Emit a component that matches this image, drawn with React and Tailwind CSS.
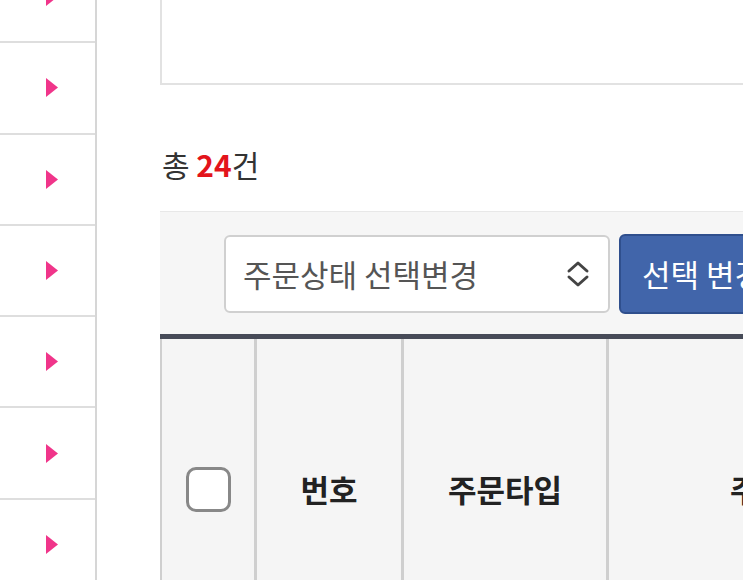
import React from "react";

const sideRows = [0, 1, 2, 3, 4, 5, 6];

function Triangle() {
  return (
    <svg width="12" height="19" viewBox="0 0 12 19" className="block">
      <path d="M0 0 L12 9.5 L0 19 Z" fill="#f0358a" />
    </svg>
  );
}

function Chevrons() {
  return (
    <svg width="24" height="28" viewBox="0 0 24 28" fill="none" stroke="#444" strokeWidth="3" strokeLinecap="round" strokeLinejoin="round">
      <path d="M3 11 L12 3 L21 11" />
      <path d="M3 17 L12 25 L21 17" />
    </svg>
  );
}

export default function App() {
  return (
    <div
      className="flex h-[580px] w-[743px] overflow-hidden bg-white"
      style={{ fontFamily: '"Noto Sans CJK KR", "Noto Sans", sans-serif' }}
    >
      <aside className="-mt-[48px] w-[97px] shrink-0 border-r-2 border-[#d6d6d6]">
        {sideRows.map((row) => (
          <div
            key={row}
            className="flex h-[91.3px] items-center border-b-2 border-[#dedede] pl-[46px]"
          >
            <Triangle />
          </div>
        ))}
      </aside>

      <main className="ml-[63px] min-w-0 flex-1">
        <div className="-mt-[35px] h-[120px] border-2 border-r-0 border-[#e2e2e2] bg-white" />

        <p className="mt-[64px] pl-[2px] text-[30px] leading-[30px] text-[#333]">
          총 <span className="font-bold text-[#e3141b]">24</span>건
        </p>

        <div className="mt-[32px] flex items-center gap-[9px] border-t border-[#e8e8e8] bg-[#f6f6f6] pb-[20px] pl-[64px] pt-[22px]">
          <div className="flex h-[78px] w-[386px] shrink-0 items-center justify-between rounded-[6px] border-2 border-[#d0d0d0] bg-white pl-[17px] pr-[18px]">
            <span className="whitespace-nowrap text-[31px] text-[#555]">주문상태 선택변경</span>
            <Chevrons />
          </div>
          <button className="flex h-[80px] w-[200px] shrink-0 items-center rounded-[6px] border-2 border-[#2f4f8d] bg-[#4165aa] pl-[21px] text-[31px] text-white">
            <span className="whitespace-nowrap">선택 변경</span>
          </button>
        </div>

        <div className="border-t-[5px] border-[#474b58]">
          <div className="flex h-[300px] bg-[#f5f5f5] text-[31px] font-bold text-[#222]">
            <div className="flex w-[97px] shrink-0 items-center justify-center border-l-2 border-r-[3px] border-[#cfcfcf]">
              <span className="block h-[45px] w-[45px] rounded-[10px] border-[3px] border-[#888] bg-white" />
            </div>
            <div className="flex w-[147px] shrink-0 items-center justify-center border-r-[3px] border-[#cfcfcf]">
              번호
            </div>
            <div className="flex w-[205px] shrink-0 items-center justify-center border-r-[3px] border-[#cfcfcf]">
              주문타입
            </div>
            <div className="flex w-[356px] shrink-0 items-center justify-center whitespace-nowrap">
              주문상태
            </div>
          </div>
        </div>
      </main>
    </div>
  );
}
